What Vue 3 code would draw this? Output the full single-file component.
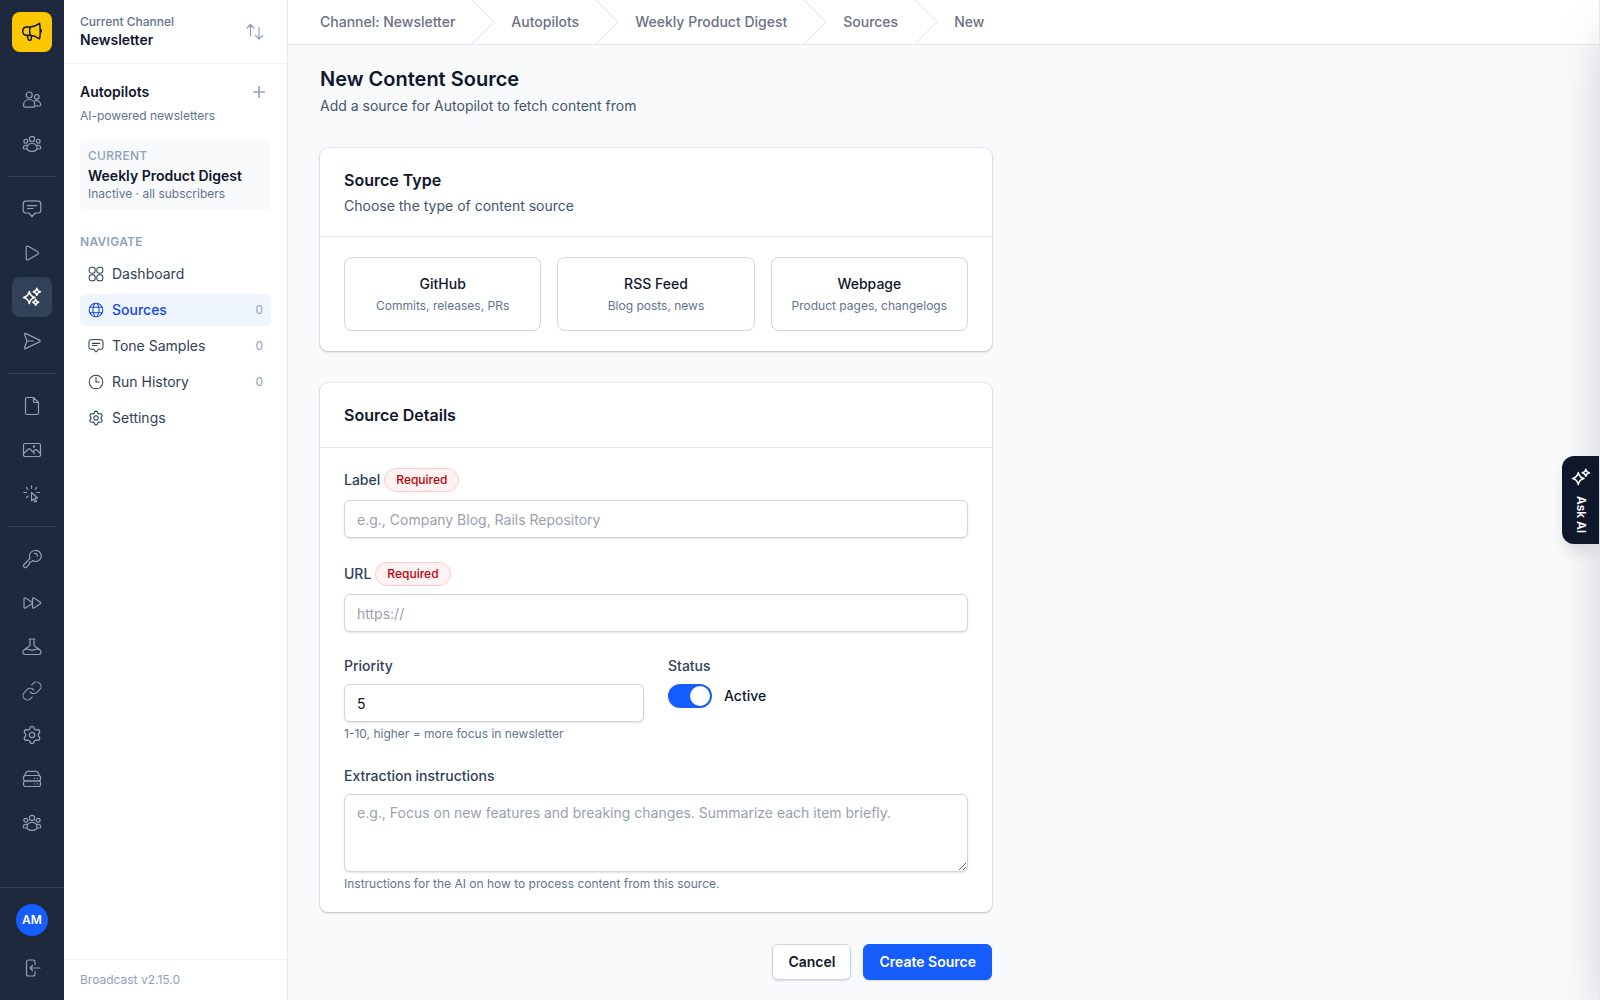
<script setup>
import { ref } from 'vue'

const icons = {
  horn: '<path d="M4.500 5C2 5 .8 7 .8 9.300s1.200 4 3.700 4h3.700c3.500.2 6.300 1.500 9.300 3.500.9-2.500 1-12.500 0-15.500-3 2.200-5.800 3.500-9.300 3.700ZM8.200 5c-.7 2.500-.7 5.500 0 8.300M5.300 13.500l.9 3.700c.5 1.700 3.100 1.500 3.100-.5v-3.200M18.300 6.800c1.100.6 1.200 2.800.2 3.700"/>',
  users: '<circle cx="7.200" cy="5" r="3"/><path d="M1.500 15.500c0-3.500 2.300-6 5.700-6s5.700 2.500 5.700 6c0 1-.5 1.700-1.500 1.700H3c-1 0-1.500-.7-1.500-1.700Z"/><circle cx="14.800" cy="6.800" r="2.300"/><path d="M12.500 11c3-1.300 6.200.6 6.200 3.800 0 .8-.4 1.200-1.100 1.200H13"/>',
  group: '<circle cx="10" cy="5" r="2.600"/><circle cx="3.800" cy="7.300" r="1.900"/><circle cx="16.200" cy="7.300" r="1.900"/><path d="M5 14c0-2.700 2-4.500 5-4.500s5 1.800 5 4.500c0 1.800-2 3.300-5 3.300S5 15.800 5 14ZM4.800 11.300c-2-.3-3.500.9-3.500 2.600 0 .7.500 1.100 1.200 1.100H5M15.200 11.300c2-.3 3.500.9 3.500 2.600 0 .7-.5 1.100-1.200 1.100H15"/>',
  chat: '<path d="M3.500 2.200C7.500 1.800 12.500 1.800 16.500 2.200c1.500.2 2.300 1.300 2.300 2.800v6.300c0 1.500-.8 2.500-2.300 2.700h-3.300L10 17.500 6.800 14H3.500c-1.500-.2-2.300-1.200-2.300-2.700V5c0-1.500.8-2.600 2.300-2.800ZM5.500 6.700h9M5.500 9.500h5.500"/>',
  play: '<path d="M4.200 4.500c0-1.200 1-1.700 2-1.200l9.600 5.500c.9.600.9 1.800 0 2.400l-9.600 5.500c-1 .5-2 0-2-1.200Z"/>',
  spark: '<path d="M7.300 4.500C8 8.200 9.500 9.700 13 10.500c-3.500.8-5 2.300-5.700 6-.7-3.700-2.200-5.200-5.800-6 3.600-.8 5.100-2.300 5.800-6ZM14.800 1.300c.4 2.100 1.300 3 3.600 3.500-2.300.5-3.200 1.400-3.600 3.500-.4-2.100-1.300-3-3.600-3.500 2.300-.5 3.200-1.400 3.600-3.500ZM13.700 12.300c.3 1.700 1.100 2.500 3 3-1.900.5-2.700 1.300-3 3-.3-1.700-1.100-2.500-3-3 1.900-.5 2.700-1.300 3-3Z"/>',
  duo: '<path d="M7.300 4.500C8 8.200 9.500 9.700 13 10.500c-3.500.8-5 2.300-5.700 6-.7-3.700-2.200-5.200-5.800-6 3.600-.8 5.100-2.300 5.800-6ZM14.800 1.300c.4 2.100 1.300 3 3.600 3.500-2.300.5-3.200 1.400-3.600 3.500-.4-2.100-1.300-3-3.600-3.500 2.300-.5 3.200-1.400 3.600-3.500Z"/>',
  send: '<path d="M2.500 3.300c-.3-.8.200-1.300 1-.9l14 6.700c.8.400.8 1.400 0 1.800l-14 6.700c-.8.400-1.300-.1-1-.9L5 10ZM5 10h6.500"/>',
  doc: '<path d="M5 1.500h6.500l5 5V17c0 .9-.6 1.500-1.500 1.500H5c-.9 0-1.500-.6-1.500-1.500V3c0-.9.600-1.500 1.500-1.500ZM11.500 1.500v3.700c0 .8.500 1.300 1.300 1.300h3.700"/>',
  image: '<rect x="1.500" y="3.500" width="17" height="13" rx="1.500"/><path d="m1.500 13.500 5-4.500c.5-.5 1-.5 1.500 0l4.500 4.500M11 12l2-2c.6-.6 1.200-.6 1.800 0l3.700 3.500"/><circle cx="12" cy="6.500" r=".6"/>',
  click: '<path d="M9.500 8.500v8.200l2-1.800 1.300 3 1.600-.7-1.300-3 2.500-.2ZM9.500 1.800v2.400M4.500 3.500l1.200 1.800M14.500 3.500l-1.200 1.800M1.800 8.500h2.700M14.800 8.500h2.700M4.300 13.500l1.700-1.300"/>',
  key: '<path d="M13 1.500a5.500 5.500 0 0 0-5 7.800L2 15.500c-.9.900-.6 2.500.6 3 .8.300 1.700 0 2.200-.6l2.700-3.100V13h1.800l1.500-1.400A5.500 5.500 0 1 0 13 1.500ZM12.300 4.500c1.800-.4 3.300 1 3.200 2.800"/>',
  forward: '<path d="M2 6c0-.9.700-1.300 1.500-.9L10 9.200c.6.400.6 1.200 0 1.600l-6.500 4.100c-.8.400-1.500 0-1.500-.9ZM10.500 6c0-.9.700-1.300 1.500-.9l6.300 4.100c.6.400.6 1.200 0 1.600L12 14.900c-.8.400-1.500 0-1.500-.9Z"/>',
  flask: '<path d="M7 2h6M8 2v5.500c0 1-.5 1.500-1.500 2.200l-4 2.800C1 13.600.8 15 1.200 16c.3.900 1 1.500 2 1.500h13.600c1 0 1.700-.6 2-1.500.4-1 .2-2.400-1.300-3.500l-4-2.800C12.500 9 12 8.500 12 7.500V2M3.500 12.500c2.500-1 4 .7 6.500.7s4-1.700 6.500-.7"/>',
  link: '<path transform="translate(-.8 -.8) scale(.9)" d="M10 13a5 5 0 0 0 7.540.54l3-3a5 5 0 0 0-7.070-7.070l-1.720 1.710M14 11a5 5 0 0 0-7.540-.54l-3 3a5 5 0 0 0 7.070 7.070l1.710-1.710"/>',
  gear: '<circle cx="10" cy="10" r="2.700"/><path d="M8.500 2.500c.5-1.300 2.500-1.300 3 0l.4 1c.3.700 1 1.100 1.700 1l1.200-.1c1.400-.1 2.400 1.500 1.600 2.700l-.7.900c-.4.600-.4 1.400 0 2l.7.900c.8 1.200-.2 2.800-1.600 2.700l-1.200-.1c-.7-.1-1.400.4-1.700 1l-.4 1c-.5 1.300-2.500 1.300-3 0l-.4-1c-.3-.6-1-1.100-1.700-1l-1.200.1c-1.400.1-2.400-1.500-1.600-2.700l.7-.9c.4-.6.4-1.400 0-2l-.7-.9C2.800 5.900 3.800 4.300 5.200 4.400l1.200.1c.7.100 1.400-.3 1.700-1Z" transform="translate(-1.500 -.35) scale(1.150)"/>',
  server: '<path d="M2 7.500 4.200 3.300c.4-.6.900-.9 1.600-.9h8.400c.7 0 1.200.3 1.600.9L18 7.500"/><rect x="1.500" y="6.500" width="17" height="5.500" rx="2"/><rect x="1.500" y="12" width="17" height="5.500" rx="2"/><path d="M12.500 9.300h.2M15.300 9.300h.2M12.500 14.800h.2M15.300 14.800h.2"/>',
  exit: '<path d="M13 6.500V4c0-1.200-.8-2-2-2H6.500c-1.200 0-2 .8-2 2v12c0 1.200.8 2 2 2H11c1.200 0 2-.8 2-2v-2.500M18 10H8M10.500 7.500 8 10l2.500 2.500"/>',
  sort: '<path d="M5.500 14V2.500M2 6l3.500-3.500L9 6M14 5.500V17M10.500 13.500 14 17l3.500-3.500"/>',
  plus: '<path d="M10 3.500v13M3.500 10h13"/>',
  grid: '<rect x="1.500" y="1.500" width="7.500" height="7.500" rx="3"/><rect x="11" y="1.500" width="7.500" height="7.500" rx="3"/><rect x="1.500" y="11" width="7.500" height="7.500" rx="3"/><rect x="11" y="11" width="7.500" height="7.500" rx="3"/>',
  globe: '<circle cx="10" cy="10" r="8.500"/><path d="M2.500 6.500h15M2.500 13.500h15M8.500 1.700c-3 5-3 11.600 0 16.600M11.500 1.700c3 5 3 11.600 0 16.600"/>',
  clock: '<circle cx="10" cy="10" r="8.500"/><path d="M10 4.500V10h4.200"/>',
}

const rail = [
  ['users', 'group'],
  ['chat', 'play', 'spark', 'send'],
  ['doc', 'image', 'click'],
  ['key', 'forward', 'flask', 'link', 'gear', 'server', 'group'],
]
const labels = {
  users: 'Subscribers', group: 'Segments', chat: 'Messages', play: 'Sequences', spark: 'Autopilots', send: 'Broadcasts',
  doc: 'Templates', image: 'Media', click: 'Forms', key: 'API keys', forward: 'Queue', flask: 'Tests', link: 'Links',
  gear: 'Settings', server: 'Servers',
}

const nav = [
  { icon: 'grid', label: 'Dashboard' },
  { icon: 'globe', label: 'Sources', count: 0, active: true },
  { icon: 'chat', label: 'Tone Samples', count: 0 },
  { icon: 'clock', label: 'Run History', count: 0 },
  { icon: 'gear', label: 'Settings' },
]

const crumbs = ['Channel: Newsletter', 'Autopilots', 'Weekly Product Digest', 'Sources', 'New']

const types = [
  { name: 'GitHub', hint: 'Commits, releases, PRs' },
  { name: 'RSS Feed', hint: 'Blog posts, news' },
  { name: 'Webpage', hint: 'Product pages, changelogs' },
]

const form = ref({ type: '', label: '', url: '', priority: '5', active: true, instructions: '' })
</script>

<template>
  <div class="app">
    <aside class="rail">
      <a href="#" class="logo" aria-label="Home"><svg class="icon" viewBox="0 0 20 20" v-html="icons.horn" /></a>
      <nav class="rail-nav" aria-label="Main">
        <div v-for="(group, g) in rail" :key="g" class="rail-group">
          <a v-for="name in group" :key="name" href="#" class="rail-link" :class="{ active: name === 'spark' }" :aria-label="labels[name]">
            <svg class="icon" viewBox="0 0 20 20" v-html="icons[name]" />
          </a>
        </div>
      </nav>
      <div class="rail-foot">
        <a href="#" class="avatar">AM</a>
        <a href="#" class="rail-link" aria-label="Sign out"><svg class="icon" viewBox="0 0 20 20" v-html="icons.exit" /></a>
      </div>
    </aside>

    <aside class="side">
      <div class="channel">
        <div>
          <div class="channel-caption">Current Channel</div>
          <div class="strong">Newsletter</div>
        </div>
        <button type="button" class="icon-button switch" aria-label="Switch channel"><svg class="icon" viewBox="0 0 20 20" v-html="icons.sort" /></button>
      </div>
      <div class="side-body">
        <div class="side-title">
          <h2 class="strong">Autopilots</h2>
          <button type="button" class="icon-button" aria-label="New autopilot"><svg class="icon small" viewBox="0 0 20 20" v-html="icons.plus" /></button>
        </div>
        <p class="side-text">AI-powered newsletters</p>
        <div class="current">
          <div class="caps medium">Current</div>
          <div class="strong current-name">Weekly Product Digest</div>
          <div class="muted">Inactive · all subscribers</div>
        </div>
        <div class="caps">Navigate</div>
        <nav class="side-nav" aria-label="Autopilot">
          <a v-for="item in nav" :key="item.label" href="#" class="side-link" :class="{ active: item.active }">
            <svg class="icon small" viewBox="0 0 20 20" v-html="icons[item.icon]" />
            <span>{{ item.label }}</span>
            <span v-if="item.count !== undefined" class="count">{{ item.count }}</span>
          </a>
        </nav>
      </div>
      <div class="version">Broadcast v2.15.0</div>
    </aside>

    <div class="content">
      <nav class="crumbs" aria-label="Breadcrumb">
        <template v-for="(crumb, i) in crumbs" :key="crumb">
          <svg v-if="i" class="chevron" viewBox="0 0 24 44" preserveAspectRatio="none" aria-hidden="true"><path d="M.293 0l22 22-22 22h1.414l22-22-22-22H.293z" /></svg>
          <a href="#">{{ crumb }}</a>
        </template>
      </nav>

      <main class="page">
        <header class="page-head">
          <h1>New Content Source</h1>
          <p>Add a source for Autopilot to fetch content from</p>
        </header>

        <form class="form" @submit.prevent>
          <section class="card">
            <div class="card-head">
              <h2>Source Type</h2>
              <p>Choose the type of content source</p>
            </div>
            <div class="card-body types">
              <label v-for="type in types" :key="type.name" class="type">
                <input v-model="form.type" type="radio" name="type" :value="type.name" />
                <span class="type-name">{{ type.name }}</span>
                <span class="type-hint">{{ type.hint }}</span>
              </label>
            </div>
          </section>

          <section class="card">
            <div class="card-head">
              <h2>Source Details</h2>
            </div>
            <div class="card-body fields">
              <div class="field">
                <div class="label-row"><label for="label">Label</label><span class="required">Required</span></div>
                <input id="label" v-model="form.label" class="input" type="text" placeholder="e.g., Company Blog, Rails Repository" />
              </div>
              <div class="field">
                <div class="label-row"><label for="url">URL</label><span class="required">Required</span></div>
                <input id="url" v-model="form.url" class="input" type="url" placeholder="https://" />
              </div>
              <div class="pair">
                <div class="field">
                  <label for="priority">Priority</label>
                  <input id="priority" v-model="form.priority" class="input" type="number" min="1" max="10" />
                  <p class="hint">1-10, higher = more focus in newsletter</p>
                </div>
                <div class="field">
                  <label for="status">Status</label>
                  <div class="toggle-row">
                    <input id="status" v-model="form.active" class="toggle" type="checkbox" role="switch" />
                    <span>Active</span>
                  </div>
                </div>
              </div>
              <div class="field">
                <label for="instructions">Extraction instructions</label>
                <textarea id="instructions" v-model="form.instructions" class="input" rows="3" placeholder="e.g., Focus on new features and breaking changes. Summarize each item briefly."></textarea>
                <p class="hint">Instructions for the AI on how to process content from this source.</p>
              </div>
            </div>
          </section>

          <div class="actions">
            <button type="button" class="button">Cancel</button>
            <button type="submit" class="button primary">Create Source</button>
          </div>
        </form>
      </main>
    </div>

    <div class="drawer" aria-hidden="true"></div>
    <button type="button" class="ask">
      <svg class="icon" viewBox="0 0 20 20" v-html="icons.duo" />
      <span>Ask AI</span>
    </button>
  </div>
</template>

<style>
body {
  margin: 0;
  background: #f8fafc;
}
</style>

<style scoped>
.app {
  display: flex;
  min-height: 100vh;
  overflow: hidden;
  position: relative;
  font: 14px/20px Inter, "Liberation Sans", sans-serif;
  color: #0f172b;
}
.app *,
.app *::before {
  box-sizing: border-box;
}
a {
  color: inherit;
  text-decoration: none;
}
h1,
h2,
p {
  margin: 0;
}
button,
input,
textarea {
  font: inherit;
  color: inherit;
  margin: 0;
}
.icon {
  display: block;
  flex: none;
  width: 20px;
  height: 20px;
  fill: none;
  stroke: currentColor;
  stroke-width: 1.2;
  stroke-linecap: round;
  stroke-linejoin: round;
}
.icon.small {
  width: 16px;
  height: 16px;
  stroke-width: 1.3;
}

/* Icon rail */
.rail {
  flex: none;
  width: 64px;
  display: flex;
  flex-direction: column;
  background: #1d293d;
  color: #90a1b9;
}
.logo {
  display: flex;
  align-items: center;
  justify-content: center;
  width: 40px;
  height: 40px;
  margin: 12px;
  border-radius: 8px;
  background: #fdc700;
  color: #0f172b;
}
.logo .icon,
.rail-link.active .icon,
.ask .icon {
  stroke-width: 1.5;
}
.rail-nav {
  flex: 1;
  padding: 16px 8px;
}
.rail-group {
  display: flex;
  flex-direction: column;
  align-items: center;
  gap: 4px;
}
.rail-group + .rail-group {
  margin-top: 12px;
  padding-top: 12px;
  border-top: 1px solid #314158;
}
.rail-link {
  display: flex;
  align-items: center;
  justify-content: center;
  width: 40px;
  height: 40px;
  border-radius: 8px;
}
.rail-link.active {
  background: #314158;
  color: #fff;
}
.rail-foot {
  display: flex;
  flex-direction: column;
  align-items: center;
  gap: 12px;
  padding: 16px 0 12px;
  border-top: 1px solid #314158;
}
.avatar {
  width: 32px;
  height: 32px;
  border-radius: 50%;
  background: #155dfc;
  color: #fff;
  font-size: 12px;
  line-height: 32px;
  font-weight: 600;
  text-align: center;
}

/* Channel sidebar */
.side {
  flex: none;
  width: 224px;
  display: flex;
  flex-direction: column;
  background: #fff;
  border-right: 1px solid #e5e7eb;
}
.strong {
  font-size: 14px;
  line-height: 20px;
  font-weight: 600;
}
.channel {
  display: flex;
  align-items: center;
  justify-content: space-between;
  padding: 14px 16px;
  box-shadow: inset 0 -1px #f3f4f6;
}
.channel-caption,
.side-text,
.muted {
  font-size: 12px;
  line-height: 16px;
  color: #62748e;
}
.channel-caption {
  font-weight: 500;
}
.icon-button {
  display: flex;
  align-items: center;
  justify-content: center;
  width: 24px;
  height: 24px;
  padding: 0;
  border: 0;
  background: none;
  color: #90a1b9;
}
.switch {
  width: 32px;
}
.icon-button .small {
  stroke-width: 2;
}
.side-body {
  flex: 1;
  padding: 16px;
}
.side-title {
  display: flex;
  align-items: center;
  justify-content: space-between;
}
.side-text {
  margin-top: 4px;
}
.current {
  margin: 16px 0 24px;
  padding: 8px;
  border-radius: 6px;
  background: #f8fafc;
}
.current-name {
  margin-top: 2px;
}
.caps {
  font-size: 12px;
  line-height: 16px;
  font-weight: 600;
  letter-spacing: 0.025em;
  text-transform: uppercase;
  color: #90a1b9;
}
.caps.medium {
  font-weight: 500;
}
.side-nav {
  display: flex;
  flex-direction: column;
  gap: 4px;
  margin-top: 8px;
}
.side-link {
  display: flex;
  align-items: center;
  gap: 8px;
  height: 32px;
  padding: 0 8px;
  border-radius: 6px;
  color: #314158;
}
.side-link.active {
  background: #eff6ff;
  color: #1447e6;
  font-weight: 500;
}
.count {
  margin-left: auto;
  font-size: 12px;
  font-weight: 400;
  color: #90a1b9;
}
.version {
  padding: 12px 16px;
  border-top: 1px solid #f3f4f6;
  font-size: 12px;
  line-height: 16px;
  color: #90a1b9;
}

/* Content */
.content {
  flex: 1;
  min-width: 0;
}
.crumbs {
  display: flex;
  align-items: center;
  gap: 16px;
  height: 44px;
  padding: 0 32px;
  background: #fff;
  box-shadow: 0 1px #e5e7eb;
  font-weight: 500;
  color: #6a7282;
}
.chevron {
  flex: none;
  width: 24px;
  height: 44px;
  fill: #e5e7eb;
}
.page {
  padding: 20px 32px;
}
.page-head p {
  margin-top: 2px;
  color: #45556c;
}
.card-head p {
  margin-top: 4px;
  color: #45556c;
}
h1 {
  font-size: 20px;
  line-height: 30px;
  font-weight: 600;
}
.form {
  display: flex;
  flex-direction: column;
  gap: 32px;
  max-width: 672px;
  margin-top: 32px;
}
.card {
  border-radius: 8px;
  background: #fff;
  box-shadow: 0 0 0 1px rgb(15 23 43 / 6%), 0 1px 3px rgb(0 0 0 / 10%), 0 1px 2px rgb(0 0 0 / 10%);
}
.card-head {
  padding: 20px 24px;
  border-bottom: 1px solid #e2e8f0;
}
.card-head h2 {
  font-size: 16px;
  line-height: 24px;
  font-weight: 600;
}
.card-body {
  padding: 20px 24px;
}
.types {
  display: grid;
  grid-template-columns: repeat(3, 1fr);
  gap: 16px;
}
.type {
  display: flex;
  flex-direction: column;
  align-items: center;
  gap: 4px;
  position: relative;
  padding: 16px;
  border: 1px solid #d1d5dc;
  border-radius: 8px;
}
.type input {
  position: absolute;
  inset: 0;
  width: 100%;
  height: 100%;
  opacity: 0;
}
.type-name {
  font-weight: 500;
}
.type-hint,
.hint {
  font-size: 12px;
  line-height: 16px;
  color: #62748e;
}
.fields {
  display: flex;
  flex-direction: column;
  gap: 24px;
}
.pair {
  display: grid;
  grid-template-columns: 1fr 1fr;
  gap: 24px;
}
.field {
  display: flex;
  flex-direction: column;
}
.field label {
  font-weight: 500;
  color: #314158;
}
.label-row {
  display: flex;
  align-items: center;
  gap: 4px;
}
.required {
  padding: 3px 11px;
  border: 1px solid #ffc9c9;
  border-radius: 12px;
  background: #fef2f2;
  font-size: 12px;
  line-height: 16px;
  font-weight: 500;
  color: #c10007;
}
.input {
  display: block;
  width: 100%;
  margin-top: 8px;
  padding: 8px 12px;
  border: 1px solid #d1d5dc;
  border-radius: 6px;
  outline: 0;
  background: #fff;
  box-shadow: 0 1px 2px rgb(0 0 0 / 12%);
  appearance: textfield;
}
input.input {
  height: 38px;
}
textarea.input {
  resize: vertical;
}
.input::placeholder {
  color: #99a1af;
  opacity: 1;
}
.hint {
  margin-top: 4px;
}
.toggle-row {
  display: flex;
  align-items: center;
  gap: 12px;
  margin-top: 8px;
  font-weight: 500;
}
.toggle {
  display: flex;
  width: 44px;
  height: 24px;
  padding: 2px;
  border-radius: 12px;
  background: #cad5e2;
  appearance: none;
}
.toggle::before {
  content: "";
  width: 20px;
  height: 20px;
  border-radius: 50%;
  background: #fff;
}
.toggle:checked {
  justify-content: flex-end;
  background: #155dfc;
}
.actions {
  display: flex;
  justify-content: flex-end;
  gap: 12px;
}
.button {
  height: 36px;
  padding: 0 15px;
  border: 1px solid #cad5e2;
  border-radius: 6px;
  background: #fff;
  box-shadow: 0 1px 2px rgb(0 0 0 / 12%);
  font-weight: 600;
}
.primary {
  border-color: #155dfc;
  background: #155dfc;
  color: #fff;
}

/* Assistant drawer, closed past the right edge */
.drawer {
  position: absolute;
  top: 0;
  bottom: 0;
  left: calc(100% - 1px);
  width: 384px;
  border-left: 1px solid #e2e8f0;
  box-shadow: 0 25px 50px -12px rgb(0 0 0 / 25%);
}
.ask {
  position: absolute;
  right: 1px;
  top: calc(50% - 44px);
  display: flex;
  flex-direction: column;
  align-items: center;
  gap: 8px;
  width: 37px;
  height: 88px;
  padding: 12px 8px;
  border: 0;
  border-radius: 12px 0 0 12px;
  background: #0f172b;
  box-shadow: 0 10px 15px -3px rgb(0 0 0 / 12%);
  color: #fff;
  font-size: 12px;
  line-height: 16px;
  font-weight: 600;
}
.ask span {
  writing-mode: vertical-rl;
  white-space: nowrap;
}
</style>
